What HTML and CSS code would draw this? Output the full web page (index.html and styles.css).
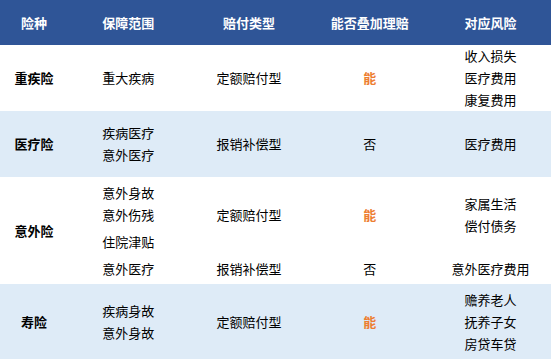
FILE: index.html
```html
<!DOCTYPE html>
<html lang="zh-CN">
<head>
    <meta charset="UTF-8">
    <meta name="viewport" content="width=device-width, initial-scale=1.0">
    <title>险种对比</title>
    <link rel="stylesheet" href="styles.css">
</head>
<body>
    <table class="insurance-table">
        <colgroup>
            <col class="col-type">
            <col><col><col><col>
        </colgroup>
        <thead>
            <tr class="head-row">
                <th>险种</th>
                <th>保障范围</th>
                <th>赔付类型</th>
                <th>能否叠加理赔</th>
                <th>对应风险</th>
            </tr>
        </thead>
        <tbody>
            <tr class="row-a">
                <td class="name">重疾险</td>
                <td>重大疾病</td>
                <td>定额赔付型</td>
                <td class="yes">能</td>
                <td class="lines">收入损失<br>医疗费用<br>康复费用</td>
            </tr>
            <tr class="row-b alt">
                <td class="name">医疗险</td>
                <td class="lines">疾病医疗<br>意外医疗</td>
                <td>报销补偿型</td>
                <td>否</td>
                <td>医疗费用</td>
            </tr>
            <tr class="row-c1">
                <td class="name" rowspan="3">意外险</td>
                <td class="lines">意外身故<br>意外伤残</td>
                <td rowspan="2">定额赔付型</td>
                <td class="yes" rowspan="2">能</td>
                <td class="lines" rowspan="2">家属生活<br>偿付债务</td>
            </tr>
            <tr class="row-c2">
                <td>住院津贴</td>
            </tr>
            <tr class="row-c3">
                <td>意外医疗</td>
                <td>报销补偿型</td>
                <td>否</td>
                <td>意外医疗费用</td>
            </tr>
            <tr class="row-d alt">
                <td class="name">寿险</td>
                <td class="lines">疾病身故<br>意外身故</td>
                <td>定额赔付型</td>
                <td class="yes">能</td>
                <td class="lines">赡养老人<br>抚养子女<br>房贷车贷</td>
            </tr>
        </tbody>
    </table>
</body>
</html>
```

FILE: styles.css
```css
body {
    margin: 0;
    background-color: #fff;
    font-family: "Noto Sans CJK SC", "Noto Sans", sans-serif;
    font-size: 13px;
    color: #000;
}
.insurance-table {
    width: 551px;
    border-collapse: collapse;
    table-layout: fixed;
}
.col-type {
    width: 68px;
}
.insurance-table th,
.insurance-table td {
    padding: 0;
    text-align: center;
    vertical-align: middle;
    line-height: 22px;
    white-space: nowrap;
}
.head-row {
    height: 45px;
    background-color: #2f5597;
}
.head-row th {
    color: #fff;
    font-weight: bold;
}
.alt {
    background-color: #deebf7;
}
.row-a { height: 66px; }
.row-b { height: 66px; }
.row-c1 { height: 54px; }
.row-c2 { height: 21px; }
.row-c3 { height: 31px; }
.row-d { height: 76px; }
.name {
    font-weight: bold;
}
.yes {
    color: #ed7d31;
    font-weight: bold;
}
.lines {
    line-height: 22.5px;
}
```
